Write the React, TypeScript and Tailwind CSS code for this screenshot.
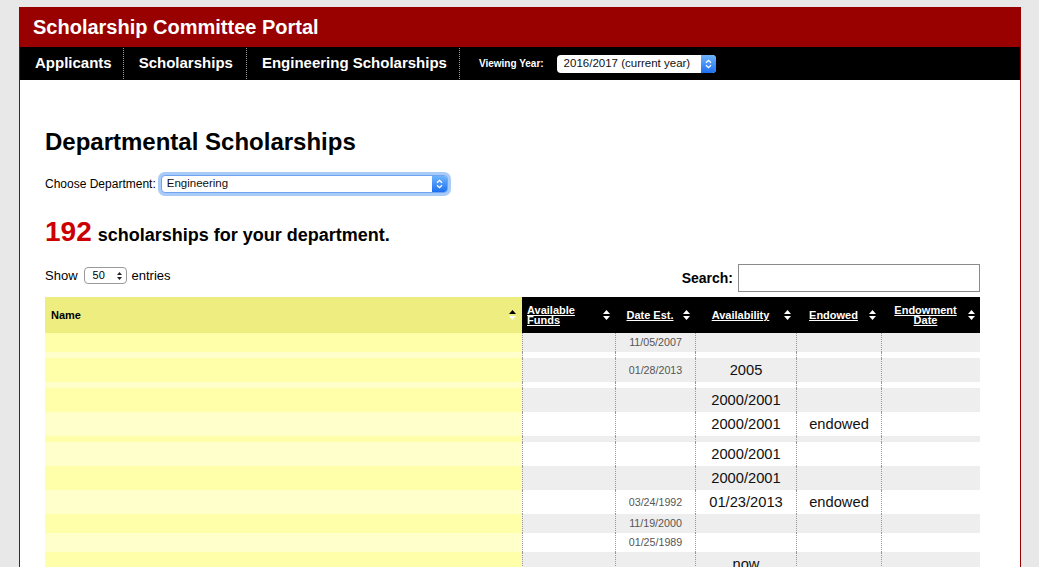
import React from 'react';

type Row = { h: 6 | 19 | 24; date?: string; avail?: string; endowed?: string };

const rows: Row[] = [
  { h: 19, date: '11/05/2007' },
  { h: 6 },
  { h: 24, date: '01/28/2013', avail: '2005' },
  { h: 6 },
  { h: 24, avail: '2000/2001' },
  { h: 24, avail: '2000/2001', endowed: 'endowed' },
  { h: 6 },
  { h: 24, avail: '2000/2001' },
  { h: 24, avail: '2000/2001' },
  { h: 24, date: '03/24/1992', avail: '01/23/2013', endowed: 'endowed' },
  { h: 19, date: '11/19/2000' },
  { h: 19, date: '01/25/1989' },
  { h: 24, avail: 'now' },
  { h: 24, avail: '2000/2001' },
  { h: 19, date: '05/12/1998' },
];

const heightClass = { 6: 'h-[6px]', 19: 'h-[19px]', 24: 'h-[24px]' };

const cols = 'grid grid-cols-[477px_93px_80px_101px_85px_99px]';

function SortIcon({ up = '#fff', down = '#fff' }: { up?: string; down?: string }) {
  return (
    <svg width="7" height="10" viewBox="0 0 7 10" className="shrink-0">
      <polygon points="0,4 3.5,0 7,4" fill={up} />
      <polygon points="0,6 7,6 3.5,10" fill={down} />
    </svg>
  );
}

function BlueArrows() {
  return (
    <svg width="9" height="12" viewBox="0 0 9 12">
      <path d="M2 4.8 L4.5 2.3 L7 4.8" stroke="#fff" strokeWidth="1.3" fill="none" />
      <path d="M2 7.2 L4.5 9.7 L7 7.2" stroke="#fff" strokeWidth="1.3" fill="none" />
    </svg>
  );
}

function NavItem({ label, pad }: { label: string; pad: string }) {
  return <div className={`flex items-center text-[15px] font-bold text-white ${pad}`}>{label}</div>;
}

function NavSep() {
  return <div className="my-[1px] border-l border-dotted border-[#9a9a9a]" />;
}

function HeadCell({ children, center = true }: { children: React.ReactNode; center?: boolean }) {
  return (
    <div className="flex items-center bg-black pl-[5px] pr-[5px]">
      <span
        className={`flex-1 text-[11px] font-bold leading-[10px] text-white underline ${center ? 'pr-[3px] text-center' : ''}`}
      >
        {children}
      </span>
      <SortIcon />
    </div>
  );
}

export default function App() {
  return (
    <div className="min-h-[567px] bg-[#e8e8e8] pt-[7px] font-['Liberation_Sans',Arial,sans-serif] text-black">
      <div className="ml-[19px] min-h-[600px] w-[1002px] border-x border-[#990000] bg-white">
        <div className="flex h-[40px] items-center bg-[#990000] pl-[13px] text-[20px] font-bold text-white">
          Scholarship Committee Portal
        </div>

        <nav className="flex h-[33px] bg-black">
          <NavItem label="Applicants" pad="pl-[15px] pr-[11px]" />
          <NavSep />
          <NavItem label="Scholarships" pad="pl-[15px] pr-[13px]" />
          <NavSep />
          <NavItem label="Engineering Scholarships" pad="pl-[15px] pr-[12px]" />
          <NavSep />
          <div className="flex items-center pl-[19px]">
            <span className="text-[10px] font-bold text-white">Viewing Year:</span>
            <div className="ml-[13px] flex h-[18px] w-[159px] overflow-hidden rounded-[4px] bg-white">
              <span className="flex flex-1 items-center pl-[7px] text-[11.5px] text-[#111]">
                2016/2017 (current year)
              </span>
              <span className="flex w-[15px] items-center justify-center bg-gradient-to-b from-[#6fb4fb] to-[#1b6ff0]">
                <BlueArrows />
              </span>
            </div>
          </div>
        </nav>

        <main className="w-[935px] pl-[25px] box-content">
          <h1 className="mt-[48px] text-[24px] font-bold leading-[28px]">Departmental Scholarships</h1>

          <div className="mt-[17px] flex h-[21px] items-center">
            <span className="text-[12px]">Choose Department:</span>
            <div className="ml-[5px] flex h-[18px] w-[287px] overflow-hidden rounded-[4px] border border-[#6ea5f2] bg-white ring-[3px] ring-[#a8cbf8]">
              <span className="flex flex-1 items-center pl-[5px] text-[11.5px] text-[#111]">Engineering</span>
              <span className="flex w-[15px] items-center justify-center bg-gradient-to-b from-[#6fb4fb] to-[#1b6ff0]">
                <BlueArrows />
              </span>
            </div>
          </div>

          <p className="mt-[22px] flex items-baseline leading-[32px]">
            <span className="text-[28px] font-bold text-[#cc0000]">192</span>
            <span className="ml-[6px] text-[18px] font-bold">scholarships for your department.</span>
          </p>

          <div className="mt-[13px] flex h-[28px] items-start justify-between">
            <div className="mt-[3px] flex h-[17px] items-center text-[13px]">
              <span>Show</span>
              <div className="ml-[6px] mr-[5px] flex h-[17px] w-[43px] items-center justify-between rounded-[4px] border border-[#9a9a9a] bg-white pl-[8px] pr-[4px]">
                <span className="text-[11px]">50</span>
                <svg width="5" height="8" viewBox="0 0 5 8">
                  <polygon points="0,3 2.5,0 5,3" fill="#222" />
                  <polygon points="0,5 5,5 2.5,8" fill="#222" />
                </svg>
              </div>
              <span>entries</span>
            </div>
            <div className="flex h-[28px] items-center">
              <span className="text-[14px] font-bold">Search:</span>
              <div className="ml-[5px] h-[28px] w-[242px] border border-[#8a8a8a] bg-white" />
            </div>
          </div>

          <div className="mt-[5px]">
            <div className={`${cols} h-[36px]`}>
              <div className="flex items-center bg-[#eeee80] pl-[6px] pr-[6px]">
                <span className="flex-1 text-[11px] font-bold">Name</span>
                <SortIcon up="#000" down="#fff" />
              </div>
              <HeadCell center={false}>
                Available
                <br />
                Funds
              </HeadCell>
              <HeadCell>Date Est.</HeadCell>
              <HeadCell>Availability</HeadCell>
              <HeadCell>Endowed</HeadCell>
              <HeadCell>
                Endowment
                <br />
                Date
              </HeadCell>
            </div>

            {rows.map((r, i) => {
              const odd = i % 2 === 0;
              const bg = odd ? 'bg-[#eeeeee]' : 'bg-white';
              const cell = `flex items-center justify-center border-l border-dotted border-[#999] ${bg}`;
              return (
                <div key={i} className={`${cols} ${heightClass[r.h]}`}>
                  <div className={odd ? 'bg-[#ffffaa]' : 'bg-[#ffffcc]'} />
                  <div className={cell} />
                  <div className={cell}>
                    {r.date && <span className="text-[10.7px] text-[#555]">{r.date}</span>}
                  </div>
                  <div className={cell}>
                    {r.avail && <span className="text-[14.7px] text-[#111]">{r.avail}</span>}
                  </div>
                  <div className={cell}>
                    {r.endowed && <span className="text-[14.7px] text-[#111]">{r.endowed}</span>}
                  </div>
                  <div className={cell} />
                </div>
              );
            })}
          </div>
        </main>
      </div>
    </div>
  );
}
